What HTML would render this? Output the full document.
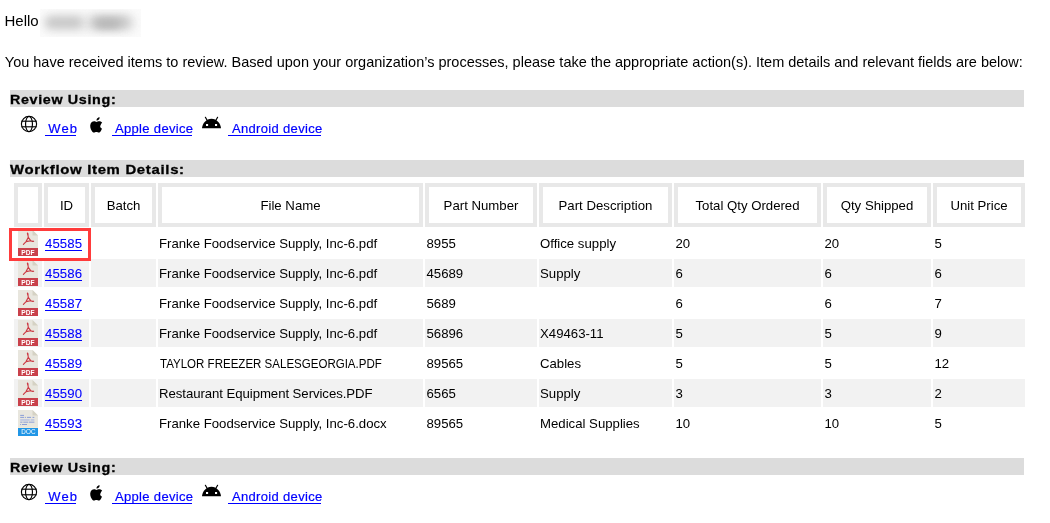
<!DOCTYPE html>
<html><head><meta charset="utf-8"><style>
html,body{margin:0;padding:0;background:#fff;width:1050px;height:523px;overflow:hidden;position:relative}
#wrap{position:absolute;left:0;top:0;width:1050px;height:523px;will-change:transform}
body{font-family:"Liberation Sans",sans-serif;color:#000}
.t{position:absolute;white-space:nowrap}
.bar{position:absolute;left:10px;width:1014px;height:17px;background:#dcdcdc}
.hd{font-weight:bold;color:#000;transform-origin:0 0;-webkit-text-stroke:0.3px #000}
.lk{color:#0000ff;letter-spacing:0.33px;-webkit-text-stroke:0.2px #0000ff}
.ul{position:absolute;height:1px;background:#0000ff}
.th{position:absolute;top:183px;height:44px;box-sizing:border-box;border:4px solid #e8e8e8;background:#fff}
.bg{position:absolute;height:28px;background:#f2f2f2}
.ic{position:absolute}
</style></head><body><div id="wrap">

<div class="t" style="left:4.5px;top:10.80px;font-size:15px;line-height:20px;">Hello</div>
<div style="position:absolute;left:40px;top:9px;width:101px;height:28px;background:#fbfbfb;overflow:hidden"><div style="position:absolute;left:4px;top:6px;width:92px;height:16px;border-radius:8px;background:#e9e9e9;filter:blur(5px)"></div><div style="position:absolute;left:6px;top:8px;width:36px;height:11px;border-radius:5px;background:#c6c6c6;filter:blur(4.5px)"></div><div style="position:absolute;left:50px;top:7px;width:40px;height:13px;border-radius:6px;background:#c6c6c6;filter:blur(4.5px)"></div><div style="position:absolute;left:57px;top:10px;width:22px;height:9px;border-radius:4px;background:#b8b8b8;filter:blur(3.5px)"></div></div>
<div class="t" style="left:4.8px;top:51.98px;font-size:14.5px;line-height:20px;letter-spacing:0px">You have received items to review. Based upon your organization’s processes, please take the appropriate action(s). Item details and relevant fields are below:</div>
<div class="bar" style="top:90px"></div>
<div class="t hd" style="left:9.6px;top:89.50px;font-size:13px;line-height:20px;letter-spacing:0.6px;transform:scaleX(1.10)">Review Using:</div>
<svg class="ic" style="left:20px;top:115px" width="18" height="18" viewBox="0 0 18 18"><g fill="none" stroke="#000" stroke-width="1.15"><circle cx="9" cy="9" r="7.6"/><ellipse cx="9" cy="9" rx="3.45" ry="7.6"/><line x1="1.5" y1="6.2" x2="16.5" y2="6.2"/><line x1="1.5" y1="11.8" x2="16.5" y2="11.8"/></g></svg>
<div class="t lk" style="left:48.2px;top:118.50px;font-size:13px;line-height:20px;letter-spacing:1.2px">Web</div>
<div class="ul" style="left:45px;top:135px;width:31px"></div>
<svg class="ic" style="left:89px;top:116.6px" width="14" height="16" viewBox="0 0 14 16"><path fill="#000" d="M11.6 8.6c0-1.9 1.5-2.8 1.6-2.9-0.9-1.3-2.3-1.5-2.8-1.5-1.2-0.1-2.3 0.7-2.9 0.7-0.6 0-1.5-0.7-2.5-0.7C3.7 4.2 2.5 5 1.8 6.2 0.5 8.5 1.5 11.900 2.700 13.700c0.6 0.9 1.3 1.900 2.300 1.800 0.9 0 1.300-0.600 2.400-0.600s1.400 0.600 2.400 0.600c1 0 1.600-0.900 2.200-1.800 0.700-1 1-2 1-2.100-0.100 0-1.900-0.700-1.900-2.900z"/><path fill="#000" d="M9.8 2.6c0.5-0.6 0.9-1.500 0.800-2.400-0.800 0-1.700 0.500-2.300 1.100-0.500 0.600-0.900 1.500-0.800 2.300 0.900 0.100 1.700-0.400 2.300-1z"/></svg>
<div class="t lk" style="left:115px;top:118.50px;font-size:13px;line-height:20px;">Apple device</div>
<div class="ul" style="left:112px;top:135px;width:80px"></div>
<svg class="ic" style="left:201px;top:116px" width="22" height="14" viewBox="0 0 22 14"><path fill="#000" d="M1 12.3C1.3 7.4 5.4 2.8 10.5 2.8S19.7 7.4 20 12.3z"/><path stroke="#000" stroke-width="1.2" stroke-linecap="round" d="M4.4 1.3L6.1 4.3M16.6 1.3L14.9 4.3"/><rect x="5" y="8" width="2.1" height="2" fill="#fff"/><rect x="14" y="8" width="2.1" height="2" fill="#fff"/></svg>
<div class="t lk" style="left:232px;top:118.50px;font-size:13px;line-height:20px;">Android device</div>
<div class="ul" style="left:228px;top:135px;width:93px"></div>
<div class="bar" style="top:160px"></div>
<div class="t hd" style="left:10.3px;top:159.50px;font-size:13px;line-height:20px;letter-spacing:0.6px;transform:scaleX(1.147)">Workflow Item Details:</div>
<div class="th" style="left:14px;width:28px"></div>
<div class="th" style="left:44px;width:45px"></div>
<div class="t" style="left:44px;width:45px;text-align:center;top:196.43px;font-size:13.2px;line-height:20px">ID</div>
<div class="th" style="left:91px;width:65px"></div>
<div class="t" style="left:91px;width:65px;text-align:center;top:196.43px;font-size:13.2px;line-height:20px">Batch</div>
<div class="th" style="left:158px;width:265px"></div>
<div class="t" style="left:158px;width:265px;text-align:center;top:196.43px;font-size:13.2px;line-height:20px">File Name</div>
<div class="th" style="left:425px;width:112px"></div>
<div class="t" style="left:425px;width:112px;text-align:center;top:196.43px;font-size:13.2px;line-height:20px">Part Number</div>
<div class="th" style="left:539px;width:133px"></div>
<div class="t" style="left:539px;width:133px;text-align:center;top:196.43px;font-size:13.2px;line-height:20px">Part Description</div>
<div class="th" style="left:674px;width:147px"></div>
<div class="t" style="left:674px;width:147px;text-align:center;top:196.43px;font-size:13.2px;line-height:20px">Total Qty Ordered</div>
<div class="th" style="left:823px;width:108px"></div>
<div class="t" style="left:823px;width:108px;text-align:center;top:196.43px;font-size:13.2px;line-height:20px">Qty Shipped</div>
<div class="th" style="left:933px;width:92px"></div>
<div class="t" style="left:933px;width:92px;text-align:center;top:196.43px;font-size:13.2px;line-height:20px">Unit Price</div>
<svg class="ic" style="left:18px;top:230px" width="20" height="26" viewBox="0 0 20 26"><path fill="#e8e6de" d="M0 0H14.5L20 5.5V18H0z"/><path fill="#d5d2c4" d="M14.5 0L20 5.5H14.5z"/><path fill="none" stroke="#cc3a44" stroke-width="1.15" stroke-linejoin="round" stroke-linecap="round" d="M9.5 3.2C9.9 4 10.1 5.6 10.3 7.3L12.8 10.8C13.8 11.3 14.8 11.5 15.6 11.2M10.3 7.3L8.1 11.6L5.4 14.3M8.1 11.6L12.8 10.8"/><path fill="#cc3a44" d="M8.8 3.2C9.2 2.4 10.2 2.6 10.3 3.6L10.2 5.2L9.5 5.3z"/><rect y="18" width="20" height="8" fill="#c9414b"/><text x="10" y="24.8" text-anchor="middle" font-family="Liberation Sans" font-weight="bold" font-size="6.6" fill="#fff" letter-spacing="0.1">PDF</text></svg>
<div class="t lk" style="left:45px;top:234.43px;font-size:13.2px;line-height:20px;letter-spacing:0.1px;-webkit-text-stroke:0.1px #0000ff">45585</div>
<div class="ul" style="left:45px;top:250px;width:37px"></div>
<div class="t" style="left:159.0px;top:234.43px;font-size:13.2px;line-height:20px;">Franke Foodservice Supply, Inc-6.pdf</div>
<div class="t" style="left:426.5px;top:234.43px;font-size:13.2px;line-height:20px;">8955</div>
<div class="t" style="left:540.0px;top:234.43px;font-size:13.2px;line-height:20px;">Office supply</div>
<div class="t" style="left:675.5px;top:234.43px;font-size:13.2px;line-height:20px;">20</div>
<div class="t" style="left:824.5px;top:234.43px;font-size:13.2px;line-height:20px;">20</div>
<div class="t" style="left:934.5px;top:234.43px;font-size:13.2px;line-height:20px;">5</div>
<div class="bg" style="left:14px;top:259px;width:28px"></div>
<div class="bg" style="left:44px;top:259px;width:45px"></div>
<div class="bg" style="left:91px;top:259px;width:65px"></div>
<div class="bg" style="left:158px;top:259px;width:265px"></div>
<div class="bg" style="left:425px;top:259px;width:112px"></div>
<div class="bg" style="left:539px;top:259px;width:133px"></div>
<div class="bg" style="left:674px;top:259px;width:147px"></div>
<div class="bg" style="left:823px;top:259px;width:108px"></div>
<div class="bg" style="left:933px;top:259px;width:92px"></div>
<svg class="ic" style="left:18px;top:260px" width="20" height="26" viewBox="0 0 20 26"><path fill="#e8e6de" d="M0 0H14.5L20 5.5V18H0z"/><path fill="#d5d2c4" d="M14.5 0L20 5.5H14.5z"/><path fill="none" stroke="#cc3a44" stroke-width="1.15" stroke-linejoin="round" stroke-linecap="round" d="M9.5 3.2C9.9 4 10.1 5.6 10.3 7.3L12.8 10.8C13.8 11.3 14.8 11.5 15.6 11.2M10.3 7.3L8.1 11.6L5.4 14.3M8.1 11.6L12.8 10.8"/><path fill="#cc3a44" d="M8.8 3.2C9.2 2.4 10.2 2.6 10.3 3.6L10.2 5.2L9.5 5.3z"/><rect y="18" width="20" height="8" fill="#c9414b"/><text x="10" y="24.8" text-anchor="middle" font-family="Liberation Sans" font-weight="bold" font-size="6.6" fill="#fff" letter-spacing="0.1">PDF</text></svg>
<div class="t lk" style="left:45px;top:264.43px;font-size:13.2px;line-height:20px;letter-spacing:0.1px;-webkit-text-stroke:0.1px #0000ff">45586</div>
<div class="ul" style="left:45px;top:280px;width:37px"></div>
<div class="t" style="left:159.0px;top:264.43px;font-size:13.2px;line-height:20px;">Franke Foodservice Supply, Inc-6.pdf</div>
<div class="t" style="left:426.5px;top:264.43px;font-size:13.2px;line-height:20px;">45689</div>
<div class="t" style="left:540.0px;top:264.43px;font-size:13.2px;line-height:20px;">Supply</div>
<div class="t" style="left:675.5px;top:264.43px;font-size:13.2px;line-height:20px;">6</div>
<div class="t" style="left:824.5px;top:264.43px;font-size:13.2px;line-height:20px;">6</div>
<div class="t" style="left:934.5px;top:264.43px;font-size:13.2px;line-height:20px;">6</div>
<svg class="ic" style="left:18px;top:290px" width="20" height="26" viewBox="0 0 20 26"><path fill="#e8e6de" d="M0 0H14.5L20 5.5V18H0z"/><path fill="#d5d2c4" d="M14.5 0L20 5.5H14.5z"/><path fill="none" stroke="#cc3a44" stroke-width="1.15" stroke-linejoin="round" stroke-linecap="round" d="M9.5 3.2C9.9 4 10.1 5.6 10.3 7.3L12.8 10.8C13.8 11.3 14.8 11.5 15.6 11.2M10.3 7.3L8.1 11.6L5.4 14.3M8.1 11.6L12.8 10.8"/><path fill="#cc3a44" d="M8.8 3.2C9.2 2.4 10.2 2.6 10.3 3.6L10.2 5.2L9.5 5.3z"/><rect y="18" width="20" height="8" fill="#c9414b"/><text x="10" y="24.8" text-anchor="middle" font-family="Liberation Sans" font-weight="bold" font-size="6.6" fill="#fff" letter-spacing="0.1">PDF</text></svg>
<div class="t lk" style="left:45px;top:294.43px;font-size:13.2px;line-height:20px;letter-spacing:0.1px;-webkit-text-stroke:0.1px #0000ff">45587</div>
<div class="ul" style="left:45px;top:310px;width:37px"></div>
<div class="t" style="left:159.0px;top:294.43px;font-size:13.2px;line-height:20px;">Franke Foodservice Supply, Inc-6.pdf</div>
<div class="t" style="left:426.5px;top:294.43px;font-size:13.2px;line-height:20px;">5689</div>
<div class="t" style="left:675.5px;top:294.43px;font-size:13.2px;line-height:20px;">6</div>
<div class="t" style="left:824.5px;top:294.43px;font-size:13.2px;line-height:20px;">6</div>
<div class="t" style="left:934.5px;top:294.43px;font-size:13.2px;line-height:20px;">7</div>
<div class="bg" style="left:14px;top:319px;width:28px"></div>
<div class="bg" style="left:44px;top:319px;width:45px"></div>
<div class="bg" style="left:91px;top:319px;width:65px"></div>
<div class="bg" style="left:158px;top:319px;width:265px"></div>
<div class="bg" style="left:425px;top:319px;width:112px"></div>
<div class="bg" style="left:539px;top:319px;width:133px"></div>
<div class="bg" style="left:674px;top:319px;width:147px"></div>
<div class="bg" style="left:823px;top:319px;width:108px"></div>
<div class="bg" style="left:933px;top:319px;width:92px"></div>
<svg class="ic" style="left:18px;top:320px" width="20" height="26" viewBox="0 0 20 26"><path fill="#e8e6de" d="M0 0H14.5L20 5.5V18H0z"/><path fill="#d5d2c4" d="M14.5 0L20 5.5H14.5z"/><path fill="none" stroke="#cc3a44" stroke-width="1.15" stroke-linejoin="round" stroke-linecap="round" d="M9.5 3.2C9.9 4 10.1 5.6 10.3 7.3L12.8 10.8C13.8 11.3 14.8 11.5 15.6 11.2M10.3 7.3L8.1 11.6L5.4 14.3M8.1 11.6L12.8 10.8"/><path fill="#cc3a44" d="M8.8 3.2C9.2 2.4 10.2 2.6 10.3 3.6L10.2 5.2L9.5 5.3z"/><rect y="18" width="20" height="8" fill="#c9414b"/><text x="10" y="24.8" text-anchor="middle" font-family="Liberation Sans" font-weight="bold" font-size="6.6" fill="#fff" letter-spacing="0.1">PDF</text></svg>
<div class="t lk" style="left:45px;top:324.43px;font-size:13.2px;line-height:20px;letter-spacing:0.1px;-webkit-text-stroke:0.1px #0000ff">45588</div>
<div class="ul" style="left:45px;top:340px;width:37px"></div>
<div class="t" style="left:159.0px;top:324.43px;font-size:13.2px;line-height:20px;">Franke Foodservice Supply, Inc-6.pdf</div>
<div class="t" style="left:426.5px;top:324.43px;font-size:13.2px;line-height:20px;">56896</div>
<div class="t" style="left:540.0px;top:324.43px;font-size:13.2px;line-height:20px;">X49463-11</div>
<div class="t" style="left:675.5px;top:324.43px;font-size:13.2px;line-height:20px;">5</div>
<div class="t" style="left:824.5px;top:324.43px;font-size:13.2px;line-height:20px;">5</div>
<div class="t" style="left:934.5px;top:324.43px;font-size:13.2px;line-height:20px;">9</div>
<svg class="ic" style="left:18px;top:350px" width="20" height="26" viewBox="0 0 20 26"><path fill="#e8e6de" d="M0 0H14.5L20 5.5V18H0z"/><path fill="#d5d2c4" d="M14.5 0L20 5.5H14.5z"/><path fill="none" stroke="#cc3a44" stroke-width="1.15" stroke-linejoin="round" stroke-linecap="round" d="M9.5 3.2C9.9 4 10.1 5.6 10.3 7.3L12.8 10.8C13.8 11.3 14.8 11.5 15.6 11.2M10.3 7.3L8.1 11.6L5.4 14.3M8.1 11.6L12.8 10.8"/><path fill="#cc3a44" d="M8.8 3.2C9.2 2.4 10.2 2.6 10.3 3.6L10.2 5.2L9.5 5.3z"/><rect y="18" width="20" height="8" fill="#c9414b"/><text x="10" y="24.8" text-anchor="middle" font-family="Liberation Sans" font-weight="bold" font-size="6.6" fill="#fff" letter-spacing="0.1">PDF</text></svg>
<div class="t lk" style="left:45px;top:354.43px;font-size:13.2px;line-height:20px;letter-spacing:0.1px;-webkit-text-stroke:0.1px #0000ff">45589</div>
<div class="ul" style="left:45px;top:370px;width:37px"></div>
<div class="t" style="left:160.0px;top:354.43px;font-size:13.2px;line-height:20px;transform:scaleX(0.874);transform-origin:0 0">TAYLOR FREEZER SALESGEORGIA.PDF</div>
<div class="t" style="left:426.5px;top:354.43px;font-size:13.2px;line-height:20px;">89565</div>
<div class="t" style="left:540.0px;top:354.43px;font-size:13.2px;line-height:20px;">Cables</div>
<div class="t" style="left:675.5px;top:354.43px;font-size:13.2px;line-height:20px;">5</div>
<div class="t" style="left:824.5px;top:354.43px;font-size:13.2px;line-height:20px;">5</div>
<div class="t" style="left:934.5px;top:354.43px;font-size:13.2px;line-height:20px;">12</div>
<div class="bg" style="left:14px;top:379px;width:28px"></div>
<div class="bg" style="left:44px;top:379px;width:45px"></div>
<div class="bg" style="left:91px;top:379px;width:65px"></div>
<div class="bg" style="left:158px;top:379px;width:265px"></div>
<div class="bg" style="left:425px;top:379px;width:112px"></div>
<div class="bg" style="left:539px;top:379px;width:133px"></div>
<div class="bg" style="left:674px;top:379px;width:147px"></div>
<div class="bg" style="left:823px;top:379px;width:108px"></div>
<div class="bg" style="left:933px;top:379px;width:92px"></div>
<svg class="ic" style="left:18px;top:380px" width="20" height="26" viewBox="0 0 20 26"><path fill="#e8e6de" d="M0 0H14.5L20 5.5V18H0z"/><path fill="#d5d2c4" d="M14.5 0L20 5.5H14.5z"/><path fill="none" stroke="#cc3a44" stroke-width="1.15" stroke-linejoin="round" stroke-linecap="round" d="M9.5 3.2C9.9 4 10.1 5.6 10.3 7.3L12.8 10.8C13.8 11.3 14.8 11.5 15.6 11.2M10.3 7.3L8.1 11.6L5.4 14.3M8.1 11.6L12.8 10.8"/><path fill="#cc3a44" d="M8.8 3.2C9.2 2.4 10.2 2.6 10.3 3.6L10.2 5.2L9.5 5.3z"/><rect y="18" width="20" height="8" fill="#c9414b"/><text x="10" y="24.8" text-anchor="middle" font-family="Liberation Sans" font-weight="bold" font-size="6.6" fill="#fff" letter-spacing="0.1">PDF</text></svg>
<div class="t lk" style="left:45px;top:384.43px;font-size:13.2px;line-height:20px;letter-spacing:0.1px;-webkit-text-stroke:0.1px #0000ff">45590</div>
<div class="ul" style="left:45px;top:400px;width:37px"></div>
<div class="t" style="left:159.0px;top:384.43px;font-size:13.2px;line-height:20px;letter-spacing:-0.06px">Restaurant Equipment Services.PDF</div>
<div class="t" style="left:426.5px;top:384.43px;font-size:13.2px;line-height:20px;">6565</div>
<div class="t" style="left:540.0px;top:384.43px;font-size:13.2px;line-height:20px;">Supply</div>
<div class="t" style="left:675.5px;top:384.43px;font-size:13.2px;line-height:20px;">3</div>
<div class="t" style="left:824.5px;top:384.43px;font-size:13.2px;line-height:20px;">3</div>
<div class="t" style="left:934.5px;top:384.43px;font-size:13.2px;line-height:20px;">2</div>
<svg class="ic" style="left:18px;top:410px" width="20" height="26" viewBox="0 0 20 26"><path fill="#e8e6de" d="M0 0H14.5L20 5.5V17H0z"/><path fill="#d5d2c4" d="M14.5 0L20 5.5H14.5z"/><rect y="17" width="20" height="1" fill="#f3ead6"/><g fill="#8197d6"><rect x="2.2" y="4.9" width="3.8" height="0.9"/><rect x="2.2" y="6.9" width="4" height="0.9"/><rect x="7" y="6.9" width="0.9" height="0.9"/><rect x="9" y="6.9" width="4" height="0.9"/><rect x="14.5" y="6.9" width="1.8" height="0.9"/><rect x="2.2" y="9.3" width="9.5" height="1.3" fill="#b2bde3"/><rect x="12.6" y="9.3" width="3.8" height="1.3" fill="#b2bde3"/><rect x="2.2" y="11.7" width="2.3" height="0.9"/><rect x="5.3" y="11.7" width="5" height="0.9"/><rect x="11" y="11.7" width="5.4" height="0.9"/><rect x="2.2" y="14" width="0.9" height="0.9"/><rect x="4" y="14" width="5" height="0.9"/></g><rect y="18" width="20" height="8" fill="#2196e6"/><text x="10.5" y="24.4" text-anchor="middle" font-family="Liberation Sans" font-size="6.3" fill="#fff" letter-spacing="0.1">DOC</text></svg>
<div class="t lk" style="left:45px;top:414.43px;font-size:13.2px;line-height:20px;letter-spacing:0.1px;-webkit-text-stroke:0.1px #0000ff">45593</div>
<div class="ul" style="left:45px;top:430px;width:37px"></div>
<div class="t" style="left:159.0px;top:414.43px;font-size:13.2px;line-height:20px;">Franke Foodservice Supply, Inc-6.docx</div>
<div class="t" style="left:426.5px;top:414.43px;font-size:13.2px;line-height:20px;">89565</div>
<div class="t" style="left:540.0px;top:414.43px;font-size:13.2px;line-height:20px;">Medical Supplies</div>
<div class="t" style="left:675.5px;top:414.43px;font-size:13.2px;line-height:20px;">10</div>
<div class="t" style="left:824.5px;top:414.43px;font-size:13.2px;line-height:20px;">10</div>
<div class="t" style="left:934.5px;top:414.43px;font-size:13.2px;line-height:20px;">5</div>
<div style="position:absolute;left:9px;top:228px;width:82px;height:33px;box-sizing:border-box;border:3px solid #ff3b3b"></div>
<div class="bar" style="top:458px"></div>
<div class="t hd" style="left:9.6px;top:457.50px;font-size:13px;line-height:20px;letter-spacing:0.6px;transform:scaleX(1.10)">Review Using:</div>
<svg class="ic" style="left:20px;top:483px" width="18" height="18" viewBox="0 0 18 18"><g fill="none" stroke="#000" stroke-width="1.15"><circle cx="9" cy="9" r="7.6"/><ellipse cx="9" cy="9" rx="3.45" ry="7.6"/><line x1="1.5" y1="6.2" x2="16.5" y2="6.2"/><line x1="1.5" y1="11.8" x2="16.5" y2="11.8"/></g></svg>
<div class="t lk" style="left:48.2px;top:486.50px;font-size:13px;line-height:20px;letter-spacing:1.2px">Web</div>
<div class="ul" style="left:45px;top:503px;width:31px"></div>
<svg class="ic" style="left:89px;top:484.6px" width="14" height="16" viewBox="0 0 14 16"><path fill="#000" d="M11.6 8.6c0-1.9 1.5-2.8 1.6-2.9-0.9-1.3-2.3-1.5-2.8-1.5-1.2-0.1-2.3 0.7-2.9 0.7-0.6 0-1.5-0.7-2.5-0.7C3.7 4.2 2.5 5 1.8 6.2 0.5 8.5 1.5 11.900 2.700 13.700c0.6 0.9 1.3 1.900 2.300 1.800 0.9 0 1.300-0.600 2.400-0.600s1.400 0.600 2.400 0.600c1 0 1.600-0.900 2.200-1.800 0.700-1 1-2 1-2.100-0.100 0-1.900-0.700-1.900-2.900z"/><path fill="#000" d="M9.8 2.6c0.5-0.6 0.9-1.500 0.800-2.400-0.800 0-1.700 0.500-2.300 1.100-0.500 0.600-0.900 1.500-0.800 2.300 0.900 0.100 1.700-0.400 2.300-1z"/></svg>
<div class="t lk" style="left:115px;top:486.50px;font-size:13px;line-height:20px;">Apple device</div>
<div class="ul" style="left:112px;top:503px;width:80px"></div>
<svg class="ic" style="left:201px;top:484px" width="22" height="14" viewBox="0 0 22 14"><path fill="#000" d="M1 12.3C1.3 7.4 5.4 2.8 10.5 2.8S19.7 7.4 20 12.3z"/><path stroke="#000" stroke-width="1.2" stroke-linecap="round" d="M4.4 1.3L6.1 4.3M16.6 1.3L14.9 4.3"/><rect x="5" y="8" width="2.1" height="2" fill="#fff"/><rect x="14" y="8" width="2.1" height="2" fill="#fff"/></svg>
<div class="t lk" style="left:232px;top:486.50px;font-size:13px;line-height:20px;">Android device</div>
<div class="ul" style="left:228px;top:503px;width:93px"></div>
</div></body></html>
